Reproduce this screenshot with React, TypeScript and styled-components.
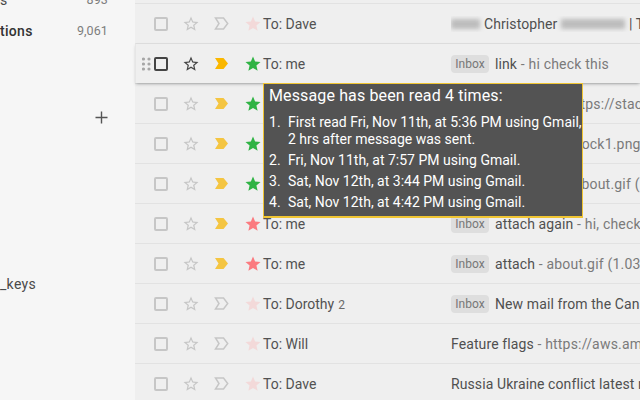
import React from 'react';
import styled, { createGlobalStyle } from 'styled-components';

const GlobalStyle = createGlobalStyle`
    html, body {
        margin: 0;
        height: 400px;
        overflow: hidden;
        background: #efefef;
        font-family: Roboto, "Liberation Sans", sans-serif;
    }
`

const Page = styled.div`
    position: relative;
    display: flex;
    width: 640px;
    height: 400px;
    overflow: hidden;
`

const Sidebar = styled.aside`
    width: 135px;
    flex-shrink: 0;
    background: #f6f6f6;
    display: flex;
    flex-direction: column;
    margin-top: -16px;
`

const SideItem = styled.div<{ $bold?: boolean }>`
    height: 31px;
    display: flex;
    justify-content: space-between;
    align-items: center;
    padding-right: 27px;
    font-size: 14px;
    font-weight: ${props => props.$bold ? 500 : 400};
    letter-spacing: 0.3px;
    color: ${props => props.$bold ? '#333' : '#4a4a4a'};
`

const SideCount = styled.span`
    font-size: 12.5px;
    font-weight: 400;
    letter-spacing: 0.1px;
    color: #7d7d7d;
`

const LabelsHeader = styled.div`
    height: 24px;
    margin-top: 59px;
    padding-right: 27px;
    display: flex;
    justify-content: flex-end;
    align-items: center;
`

const LabelItem = styled(SideItem)`
    margin-top: 139px;
`

const PlusIcon = styled.svg`
    display: block;
    stroke: #555;
    stroke-width: 1.4;
`

const List = styled.main`
    flex: 1;
    min-width: 0;
    padding-top: 3px;
    background: #efefef;
`

const Row = styled.div<{ $hover?: boolean }>`
    height: 40px;
    box-sizing: border-box;
    display: grid;
    grid-template-columns: 19px 28px 32px 30px 19px 188px 1fr;
    align-items: center;
    border-top: 1px solid ${props => props.$hover ? '#dcdcdc' : '#e2e2e2'};
    overflow: hidden;
    white-space: nowrap;
    ${props => props.$hover && `
        position: relative;
        z-index: 1;
        box-shadow: 0 2px 3px -1px rgba(60, 64, 67, 0.4);
        border-left: 1px solid #e6e6e6;
        grid-template-columns: 18px 28px 32px 30px 19px 188px 1fr;
    `}
`

const Cell = styled.div`
    display: flex;
    align-items: center;
`

const Checkbox = styled.span<{ $hover?: boolean }>`
    width: 14px;
    height: 14px;
    box-sizing: border-box;
    border: 2px solid ${props => props.$hover ? '#444' : '#c6c6c6'};
    border-radius: 2px;
`

const Sender = styled.div`
    font-size: 14px;
    color: #525252;
`

const Count = styled.span`
    font-size: 12px;
    color: #6a6a6a;
    margin-left: 4px;
`

const Subject = styled.div`
    display: flex;
    align-items: center;
    font-size: 14px;
    color: #505050;
    overflow: hidden;
    letter-spacing: 0.1px;
`

const Snippet = styled.span`
    color: #7a7a7a;
    letter-spacing: 0.2px;
`

const Chip = styled.span`
    width: 38px;
    height: 18px;
    flex-shrink: 0;
    margin-right: 6px;
    display: flex;
    justify-content: center;
    align-items: center;
    border-radius: 4px;
    background: #dedede;
    color: #777;
    font-size: 12px;
    letter-spacing: 0;
`

const Blurred = styled.span<{ $width: number }>`
    width: ${props => props.$width}px;
    height: 10px;
    flex-shrink: 0;
    margin-right: 4px;
    background: #bcbcbc;
    filter: blur(2px);
`

const Tooltip = styled.div`
    position: absolute;
    left: 263px;
    top: 83px;
    z-index: 5;
    width: 320px;
    height: 135px;
    box-sizing: border-box;
    padding: 2px 0 0 5px;
    background: #535353;
    border: 1px solid #f0c533;
    border-bottom-width: 2px;
    color: #fff;
    white-space: nowrap;
`

const TooltipTitle = styled.div`
    font-size: 16px;
    line-height: 20px;
    letter-spacing: 0.13px;
`

const ReadList = styled.ol`
    margin: 8px 0 0;
    padding: 0;
    list-style: none;
    font-size: 14px;
    line-height: 17px;
`

const ReadItem = styled.li`
    display: flex;
    margin-bottom: 4px;
`

const ReadNumber = styled.span`
    width: 19px;
    flex-shrink: 0;
`

const Svg = styled.svg<{ $color: string }>`
    display: block;
    fill: ${props => props.$color};
`

const DragIcon = styled(Svg)`
    margin-left: 6px;
`

const OutlineMarkerIcon = styled.svg`
    display: block;
    fill: none;
    stroke: #c6c6c6;
    stroke-width: 1.5;
`

const STAR_OUTLINE = 'M22 9.24l-7.19-.62L12 2 9.19 8.63 2 9.24l5.46 4.73L5.82 21 12 17.27 18.18 21l-1.63-7.03L22 9.24zM12 15.4l-3.76 2.27 1-4.28-3.32-2.88 4.38-.38L12 6.1l1.71 4.04 4.38.38-3.32 2.88 1 4.28L12 15.4z';
const STAR_FILLED = 'M12 17.27L18.18 21l-1.64-7.03L22 9.24l-7.19-.61L12 2 9.19 8.63 2 9.24l5.46 4.73L5.82 21z';

function Star(props: { color: string, filled?: boolean }) {
    return (
        <Svg $color={props.color} width="18" height="18" viewBox="0 0 24 24">
            <path d={props.filled ? STAR_FILLED : STAR_OUTLINE} />
        </Svg>
    );
}

function Marker(props: { color?: string }) {
    if (!props.color) {
        return (
            <OutlineMarkerIcon width="15" height="13" viewBox="0 0 15 13">
                <path d="M1.5 1H9.5L13.7 6.5 9.5 12H1.5L5 6.5z" />
            </OutlineMarkerIcon>
        );
    }
    return (
        <Svg $color={props.color} width="15" height="13" viewBox="0 0 15 13">
            <path d="M1 1H9.5L14 6.5 9.5 12H1L4.5 6.5z" />
        </Svg>
    );
}

function DragHandle() {
    return (
        <DragIcon $color="#a6a6a6" width="9" height="14" viewBox="0 0 9 14">
            {[1.5, 7].map(x => [2, 7, 12].map(y => (
                <circle key={`${x}-${y}`} cx={x} cy={y} r="1.6" />
            )))}
        </DragIcon>
    );
}

type Message = {
    sender: string,
    count?: number,
    inbox?: boolean,
    marker?: string,
    flag: string,
    subject: React.ReactNode,
    snippet?: string,
};

const FADED = '#f3d9d9';
const GREEN = '#2fb344';
const RED = '#fb7a7f';
const YELLOW = '#f4c542';

const messages: Message[] = [
    { sender: 'To: Dave', flag: FADED, subject: <><Blurred $width={29} />Christopher&nbsp;<Blurred $width={64} />| The</> },
    { sender: 'To: me', inbox: true, marker: '#fab700', flag: GREEN, subject: 'link', snippet: '- hi check this' },
    { sender: 'To: me', inbox: true, marker: YELLOW, flag: GREEN, subject: 'link test 2', snippet: '- https://stackoverflow.com' },
    { sender: 'To: me', inbox: true, marker: YELLOW, flag: GREEN, subject: 'attach tes', snippet: '- stock1.png' },
    { sender: 'To: me', inbox: true, marker: YELLOW, flag: GREEN, subject: 'attach ima', snippet: '- about.gif (1.03' },
    { sender: 'To: me', inbox: true, marker: YELLOW, flag: RED, subject: 'attach again', snippet: '- hi, check this' },
    { sender: 'To: me', inbox: true, marker: YELLOW, flag: RED, subject: 'attach', snippet: '- about.gif (1.03 MB)' },
    { sender: 'To: Dorothy', count: 2, inbox: true, flag: FADED, subject: 'New mail from the Canadian' },
    { sender: 'To: Will', flag: FADED, subject: 'Feature flags', snippet: '- https://aws.amazon.com' },
    { sender: 'To: Dave', flag: FADED, subject: 'Russia Ukraine conflict latest news' },
];

const reads = [
    ['First read Fri, Nov 11th, at 5:36 PM using Gmail,', '2 hrs after message was sent.'],
    ['Fri, Nov 11th, at 7:57 PM using Gmail.'],
    ['Sat, Nov 12th, at 3:44 PM using Gmail.'],
    ['Sat, Nov 12th, at 4:42 PM using Gmail.'],
];

export default function App() {
    return (
        <Page>
            <GlobalStyle />
            <Sidebar>
                <SideItem><span>s</span><SideCount>893</SideCount></SideItem>
                <SideItem $bold><span>tions</span><SideCount>9,061</SideCount></SideItem>
                <LabelsHeader>
                    <PlusIcon width="13" height="13" viewBox="0 0 13 13">
                        <path d="M6.5 0.5v12M0.5 6.5h12" />
                    </PlusIcon>
                </LabelsHeader>
                <LabelItem><span>_keys</span></LabelItem>
            </Sidebar>
            <List>
                {messages.map((message, index) => {
                    const hover = index === 1;
                    return (
                        <Row key={index} $hover={hover}>
                            <Cell>{hover && <DragHandle />}</Cell>
                            <Cell><Checkbox $hover={hover} /></Cell>
                            <Cell><Star color={hover ? '#444' : '#c6c6c6'} /></Cell>
                            <Cell><Marker color={message.marker} /></Cell>
                            <Cell><Star color={message.flag} filled /></Cell>
                            <Sender>
                                {message.sender}
                                {message.count && <Count>{message.count}</Count>}
                            </Sender>
                            <Subject>
                                {message.inbox && <Chip>Inbox</Chip>}
                                {message.subject}
                                {message.snippet && <Snippet>&nbsp;{message.snippet}</Snippet>}
                            </Subject>
                        </Row>
                    );
                })}
            </List>
            <Tooltip>
                <TooltipTitle>Message has been read 4 times:</TooltipTitle>
                <ReadList>
                    {reads.map((lines, index) => (
                        <ReadItem key={index}>
                            <ReadNumber>{index + 1}.</ReadNumber>
                            <div>{lines.map(line => <div key={line}>{line}</div>)}</div>
                        </ReadItem>
                    ))}
                </ReadList>
            </Tooltip>
        </Page>
    );
}
